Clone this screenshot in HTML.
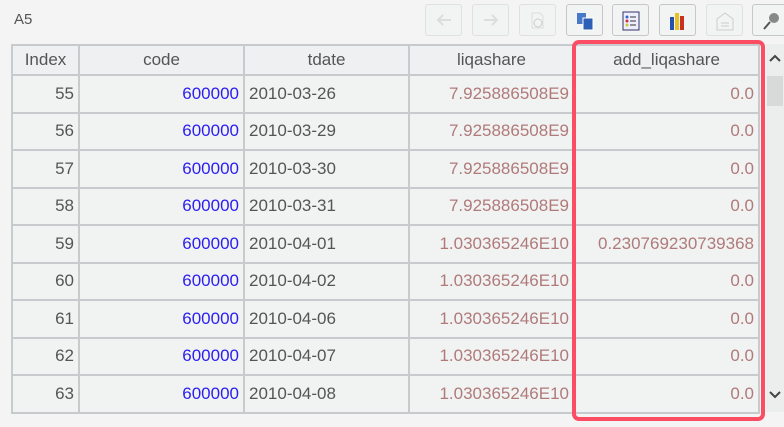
<!DOCTYPE html>
<html><head><meta charset="utf-8"><style>
body{margin:0;width:784px;height:427px;background:#f3f4f3;font-family:"Liberation Sans",sans-serif;position:relative;overflow:hidden}
.lbl{position:absolute;left:14px;top:11px;font-size:15px;color:#555}
.btn{position:absolute;top:4px;width:37px;height:32px;border:1px solid #c6c8c8;border-radius:3px;background:#f2f3f3;box-sizing:border-box}
.btn.dis{border-color:#dfe0e0}
.btn svg{position:absolute;left:7px;top:5px}
table{position:absolute;left:11px;top:44px;border-collapse:collapse;font-size:17px}
td,th{border:2px solid #c8cbcd;padding:0 4px;height:35.5px;text-align:right;white-space:nowrap}
th{height:28px;font-weight:normal;text-align:center;color:#555;background:#eef0f1}
td{background:#f1f2f2;color:#555}
.c{color:#2a1ef0}.r{color:#b07a7a}.d{text-align:left}
.box{position:absolute;left:572px;top:40px;width:193px;height:381px;border:4px solid #fb4d63;border-radius:7px;box-sizing:border-box}
.sb{position:absolute;left:766px;top:44px;width:18px;height:368px;background:#eceded}
</style></head><body>
<div class="lbl">A5</div>
<div class="btn dis" style="left:425px"><svg width="22" height="20"><path d="M18 10H5M10 5L5 10L10 15" stroke="#ddd" stroke-width="2" fill="none"/></svg></div>
<div class="btn dis" style="left:472px"><svg width="22" height="20"><path d="M4 10H17M12 5L17 10L12 15" stroke="#ddd" stroke-width="2" fill="none"/></svg></div>
<div class="btn dis" style="left:519px"><svg width="22" height="22"><path d="M5 3h8l3 3v12H5z" stroke="#ddd" fill="none"/><circle cx="11" cy="13" r="4" stroke="#ccc" fill="none"/></svg></div>
<div class="btn" style="left:566px"><svg width="22" height="22"><rect x="3" y="3" width="9" height="11" fill="#4a78c8"/><rect x="9" y="8" width="10" height="12" fill="#2d5fb6" stroke="#fff"/></svg></div>
<div class="btn" style="left:612px"><svg width="22" height="22"><rect x="3" y="2" width="16" height="18" fill="#eef" stroke="#336"/><circle cx="7" cy="7" r="1.5" fill="#36c"/><circle cx="7" cy="11" r="1.5" fill="#c33"/><circle cx="7" cy="15" r="1.5" fill="#cc3"/><path d="M10 7h6M10 11h6M10 15h6" stroke="#333"/></svg></div>
<div class="btn" style="left:659px"><svg width="22" height="22"><rect x="3" y="7" width="4" height="13" fill="#2450b0"/><rect x="8" y="3" width="4" height="17" fill="#e8c020"/><rect x="13" y="6" width="4" height="14" fill="#c83020"/></svg></div>
<div class="btn dis" style="left:706px"><svg width="22" height="22"><path d="M3 9l8-6 8 6v11H3z" stroke="#ccc" fill="none"/><path d="M7 13h8M7 16h8" stroke="#ccc"/></svg></div>
<div class="btn" style="left:752px"><svg width="22" height="22"><path d="M4 19L10 12" stroke="#555" stroke-width="2"/><circle cx="14" cy="8" r="5" fill="#888"/></svg></div>
<table>
<tr><th style="width:57px">Index</th><th style="width:155px">code</th><th style="width:155px">tdate</th><th style="width:155px">liqashare</th><th style="width:175px">add_liqashare</th></tr>
<tr><td>55</td><td class="c">600000</td><td class="d">2010-03-26</td><td class="r">7.925886508E9</td><td class="r">0.0</td></tr>
<tr><td>56</td><td class="c">600000</td><td class="d">2010-03-29</td><td class="r">7.925886508E9</td><td class="r">0.0</td></tr>
<tr><td>57</td><td class="c">600000</td><td class="d">2010-03-30</td><td class="r">7.925886508E9</td><td class="r">0.0</td></tr>
<tr><td>58</td><td class="c">600000</td><td class="d">2010-03-31</td><td class="r">7.925886508E9</td><td class="r">0.0</td></tr>
<tr><td>59</td><td class="c">600000</td><td class="d">2010-04-01</td><td class="r">1.030365246E10</td><td class="r">0.230769230739368</td></tr>
<tr><td>60</td><td class="c">600000</td><td class="d">2010-04-02</td><td class="r">1.030365246E10</td><td class="r">0.0</td></tr>
<tr><td>61</td><td class="c">600000</td><td class="d">2010-04-06</td><td class="r">1.030365246E10</td><td class="r">0.0</td></tr>
<tr><td>62</td><td class="c">600000</td><td class="d">2010-04-07</td><td class="r">1.030365246E10</td><td class="r">0.0</td></tr>
<tr><td>63</td><td class="c">600000</td><td class="d">2010-04-08</td><td class="r">1.030365246E10</td><td class="r">0.0</td></tr>
</table>
<div class="sb"><svg width="18" height="368"><path d="M4 17l5-5 5 5" stroke="#444" stroke-width="2" fill="none"/><rect x="1" y="32" width="16" height="30" fill="#d8dada"/><path d="M4 348l5 5 5-5" stroke="#444" stroke-width="2" fill="none"/></svg></div>
<div class="box"></div>
</body></html>
